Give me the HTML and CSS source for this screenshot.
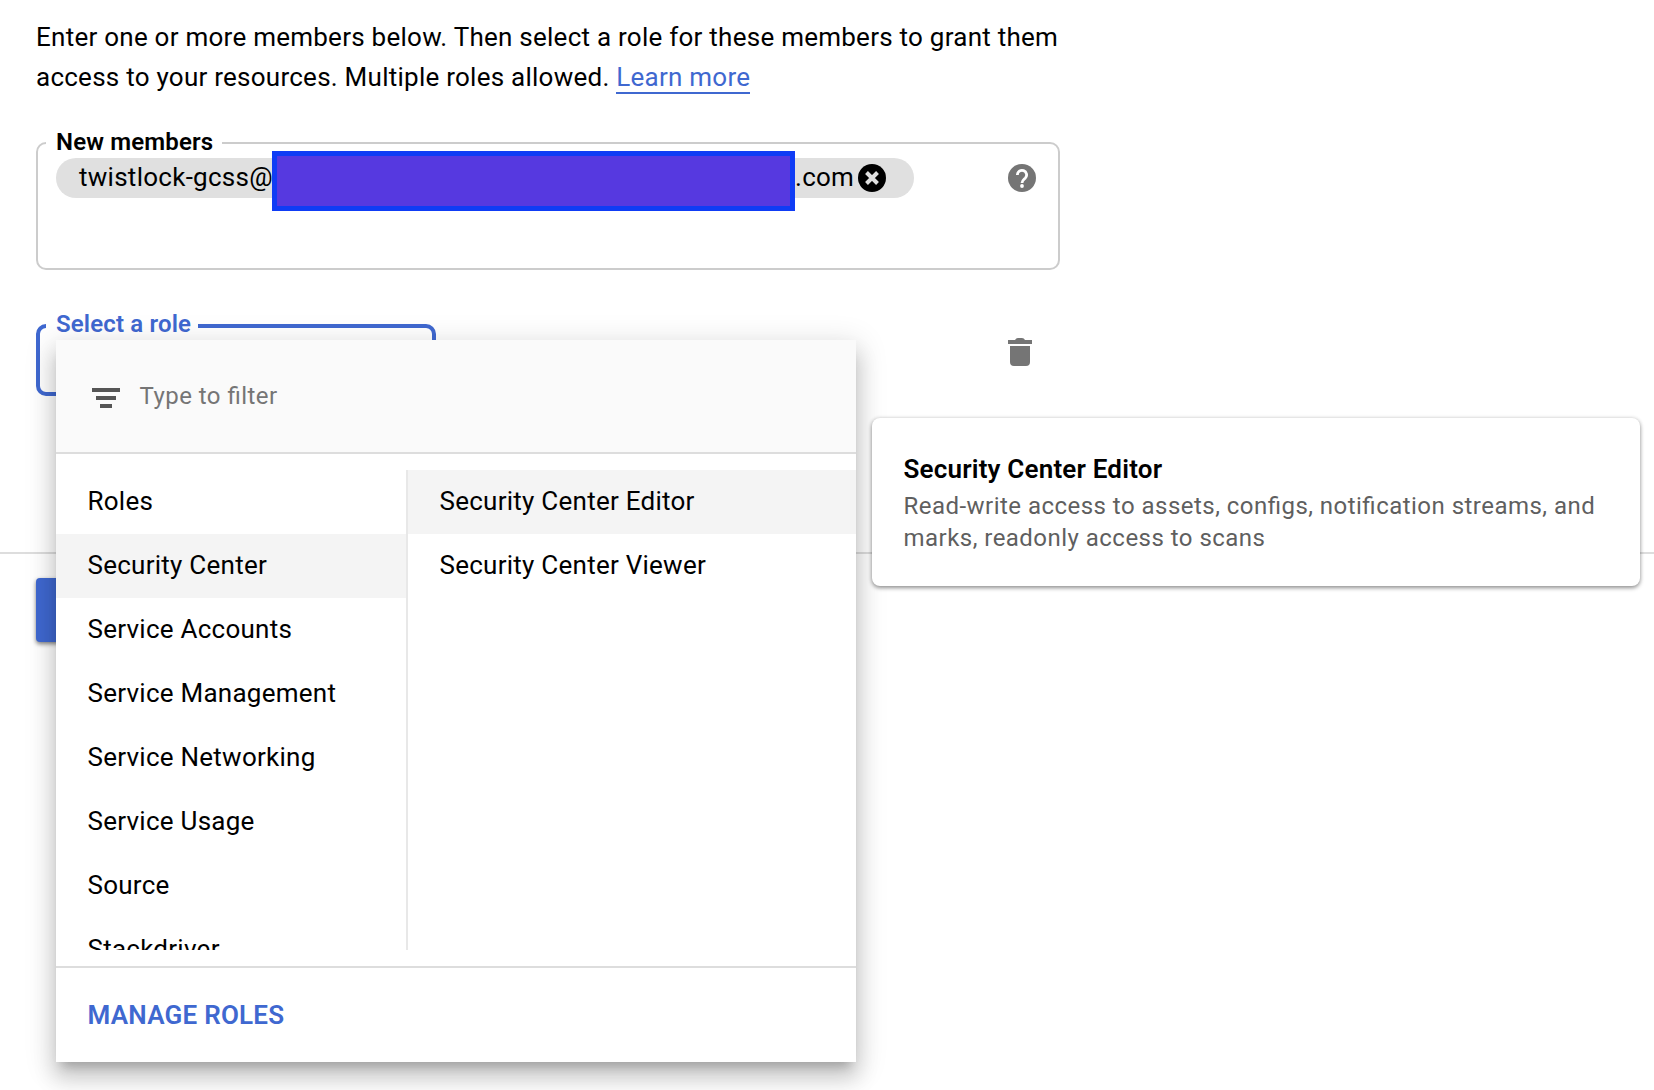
FILE: index.html
```html
<!DOCTYPE html>
<html lang="en">
<head>
<meta charset="utf-8">
<title>Add members</title>
<link rel="stylesheet" href="styles.css">
</head>
<body>
<main class="panel">
  <p class="intro">Enter one or more members below. Then select a role for these members to grant them<br>access to your resources. Multiple roles allowed. <a class="link" href="#">Learn more</a></p>

  <fieldset class="field members">
    <legend class="legend">New members</legend>
    <div class="members-row">
      <div class="chip">
        <span>twistlock-gcss@</span><span class="redacted"></span><span class="domain">.com</span>
        <svg class="chip-remove" viewBox="0 0 28 28" width="28" height="28"><circle cx="14" cy="14" r="14"/><path d="M8.500 8.500l11 11M19.500 8.500l-11 11" stroke="#e0e0e0" stroke-width="4"/></svg>
      </div>
      <svg class="help" viewBox="0 0 28 28" width="28" height="28"><circle cx="14" cy="14" r="14" fill="#757575"/><path fill="none" stroke="#fff" stroke-width="2.800" d="M9.400 11a4.600 4.500 0 1 1 8 2.900C15.600 15.700 14 16.400 14 19"/><circle cx="14" cy="22" r="1.900" fill="#fff"/></svg>
    </div>
  </fieldset>

  <div class="role-row">
    <div class="role-anchor">
      <fieldset class="field role"><legend class="legend">Select a role</legend></fieldset>
    </div>
    <svg class="trash" viewBox="0 0 24 28" width="24" height="28"><path fill="#757575" d="M0 2h7q1-2 3-2h4q2 0 3 2h7v4H0zM2 8h20v16q0 4-4 4H6q-4 0-4-4z"/></svg>
  </div>
</main>
<hr class="divider">
<div class="actions"><button class="save" aria-label="Save"></button></div>

<section class="menu">
  <div class="filter">
    <svg viewBox="0 0 28 20" width="28" height="20"><path fill="#555" d="M0 0h28v4H0zM4 8h20v4H4zM8 16h12v4H8z"/></svg>
    <span class="filter-text">Type to filter</span>
  </div>
  <div class="columns">
    <ul class="list groups">
      <li>Roles</li>
      <li class="active">Security Center</li>
      <li>Service Accounts</li>
      <li>Service Management</li>
      <li>Service Networking</li>
      <li>Service Usage</li>
      <li>Source</li>
      <li>Stackdriver</li>
    </ul>
    <ul class="list roles">
      <li class="active">Security Center Editor</li>
      <li>Security Center Viewer</li>
    </ul>
  </div>
  <div class="manage">MANAGE ROLES</div>
</section>

<aside class="tip">
  <h2 class="tip-title">Security Center Editor</h2>
  <p class="tip-text">Read-write access to assets, configs, notification streams, and<br>marks, readonly access to scans</p>
</aside>
</body>
</html>
```
FILE: styles.css
```css
* { box-sizing: border-box; }
body {
  margin: 0;
  height: 1090px;
  overflow: hidden;
  position: relative;
  background: #fff;
  color: #000;
  font-family: Roboto, sans-serif;
  font-size: 26px;
  white-space: nowrap;
}
.panel { width: 1060px; height: 552px; padding: 17px 0 0 36px; }
.intro { margin: 0; line-height: 40px; letter-spacing: 0.25px; }
.link { color: #3f68d0; text-decoration: none; border-bottom: 2px solid #3f68d0; }

.field { margin: 0; padding: 0; min-width: 0; border: 2px solid #ccc; border-radius: 10px; }
.legend { margin-left: 8px; padding: 0 10px 2px; height: 28px; line-height: 26px; font-size: 24px; font-weight: 600; letter-spacing: 0.15px; }
.members { width: 1024px; height: 141px; margin-top: 32px; }
.members .legend { width: 176px; }
.members-row { display: flex; justify-content: space-between; align-items: center; padding: 1px 22px 0 18px; }
.chip { display: flex; align-items: center; width: 858px; height: 40px; padding-left: 23px; border-radius: 20px; background: #e0e0e0; letter-spacing: 0.27px; line-height: 38px; }
.chip > span:first-child { width: 193px; padding-bottom: 2px; }
.redacted { flex: none; width: 523px; height: 60px; margin: -7px 0 -13px; background: #5639e0; border: 5px solid #0f3cf5; }
.domain { width: 63px; padding-bottom: 2px; }

.role-row { display: flex; justify-content: space-between; align-items: flex-start; margin-top: 42px; padding-right: 28px; }
.role { width: 400px; height: 84px; border: 4px solid #3f68d0; }
.role .legend { margin-left: 6px; width: 152px; line-height: 24px; padding-bottom: 4px; color: #3f68d0; }
.trash { margin-top: 26px; }

.divider { margin: 0; border: 0; height: 2px; background: #ddd; }
.actions { padding: 24px 36px; }
.save { display: block; width: 120px; height: 64px; border: 0; border-radius: 4px; background: #3f68d0; box-shadow: 0 2px 4px rgba(0,0,0,.5); }

.menu {
  position: absolute; left: 56px; top: 340px; width: 800px; height: 722px;
  display: flex; flex-direction: column; background: #fff;
  box-shadow: 0 10px 10px -6px rgba(0,0,0,.2), 0 16px 20px 2px rgba(0,0,0,.14), 0 6px 28px 4px rgba(0,0,0,.12);
}
.filter { display: flex; align-items: center; gap: 19.5px; height: 114px; padding: 4px 36px 0; background: #fafafa; border-bottom: 2px solid #ddd; }
.filter-text { padding-bottom: 4px; font-size: 24px; color: #757575; letter-spacing: 0.46px; font-feature-settings: "liga" 1; }
.columns { display: flex; height: 480px; margin: 16px 0; overflow: hidden; }
.list { margin: 0; padding: 0; list-style: none; letter-spacing: 0.25px; }
.list li { height: 64px; line-height: 62px; padding-left: 31.5px; }
.groups { width: 350px; }
.roles { flex: 1; border-left: 2px solid #e8e8e8; }
.active { background: #f4f4f4; }
.manage { flex: 1; border-top: 2px solid #ddd; padding-left: 31.5px; line-height: 94px; font-weight: 600; letter-spacing: 0.24px; color: #3f68d0; }

.tip {
  position: absolute; left: 872px; top: 418px; width: 768px; height: 168px;
  padding: 34px 31.5px; border-radius: 8px; background: #fff;
  box-shadow: 0 2px 4px rgba(0,0,0,.4), 0 0 4px rgba(0,0,0,.12);
}
.tip-title { margin: 0; font-size: 26px; line-height: 34px; font-weight: 600; letter-spacing: 0.19px; }
.tip-text { margin: 4px 0 0; font-size: 24px; line-height: 32px; color: #5f5f5f; letter-spacing: 0.47px; font-feature-settings: "liga" 1; }
```
